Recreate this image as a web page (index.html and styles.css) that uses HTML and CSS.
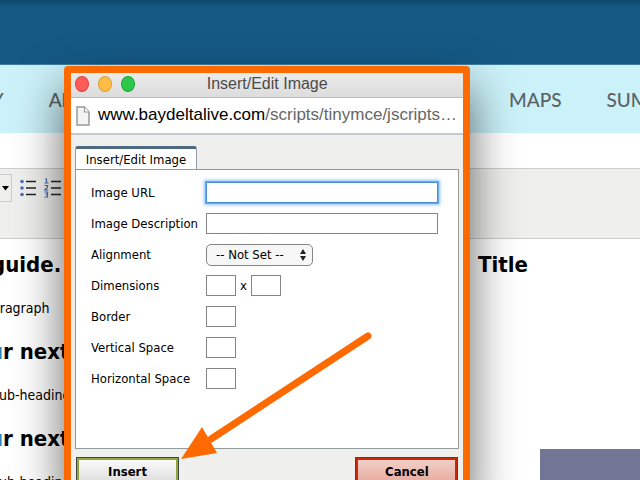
FILE: index.html
```html
<!DOCTYPE html>
<html lang="en">
<head>
    <meta charset="UTF-8">
    <meta name="viewport" content="width=device-width, initial-scale=1.0">
    <title>Insert/Edit Image</title>
    <link rel="stylesheet" href="styles.css">
</head>
<body>
    <header class="banner"></header>

    <nav class="main-nav">
        <div class="nav-left">
            <a href="#">GALLERY</a>
            <a href="#">ABOUT</a>
        </div>
        <div class="nav-right">
            <a href="#">MAPS</a>
            <a href="#">SUMMARY</a>
        </div>
    </nav>

    <!-- Editor toolbar -->
    <div class="toolbar">
        <button class="tool drop" aria-label="Font size">
            <svg width="7" height="5" viewBox="0 0 7 5"><path d="M0 0h7L3.500 4.500z"/></svg>
        </button>
        <button class="tool" aria-label="Bulleted list">
            <svg width="16" height="18" viewBox="0 0 16 18">
                <g fill="#4a6cb3"><circle cx="2" cy="2.500" r="1.800"/><circle cx="2" cy="9" r="1.800"/><circle cx="2" cy="15.500" r="1.800"/></g>
                <path d="M6 2.500h10M6 9h10M6 15.500h10" stroke="#222" stroke-width="1.500"/>
            </svg>
        </button>
        <button class="tool" aria-label="Numbered list">
            <svg width="17" height="20" viewBox="0 0 17 20">
                <path d="M1 1h1.500v4M.5 5h4M.5 7.500h3v2l-3 2.500h3.500M.5 14h3v2.200h-2 2v2.800H.5" fill="none" stroke="#4a6cb3" stroke-width="1.200"/>
                <path d="M7 3.500h10M7 10h10M7 16.500h10" stroke="#222" stroke-width="1.500"/>
            </svg>
        </button>
    </div>

    <main class="content">
        <div class="column guide">
            <h2>guide.</h2>
            <p>paragraph</p>
            <h2 class="next"><span>You</span>r next</h2>
            <p class="sub">Sub-heading</p>
            <h2 class="next"><span>You</span>r next</h2>
            <p class="sub">Sub-heading</p>
        </div>
        <div class="column side">
            <h2>Title</h2>
            <div class="block"></div>
        </div>
    </main>

    <!-- Popup window -->
    <div class="popup" role="dialog" aria-labelledby="popup-title">
        <div class="titlebar">
            <div class="lights">
                <button class="light close" aria-label="Close"></button>
                <button class="light minimize" aria-label="Minimize"></button>
                <button class="light zoom" aria-label="Zoom"></button>
            </div>
            <span id="popup-title">Insert/Edit Image</span>
        </div>
        <div class="address">
            <svg width="14" height="20" viewBox="0 0 14 20">
                <path d="M1 1h7.500L13 6v13H1z" fill="#f4f4f4" stroke="#999" stroke-width="1.500"/>
                <path d="M8.500 1v5H13" fill="#fff" stroke="#999" stroke-width="1.200"/>
            </svg>
            <div class="url"><b>www.baydeltalive.com</b>/scripts/tinymce/jscripts/tiny_mce</div>
        </div>

        <form class="dialog">
            <button type="button" class="tab">Insert/Edit Image</button>
            <div class="panel">
                <label for="src">Image URL</label>
                <input type="text" id="src" class="focused">
                <label for="alt">Image Description</label>
                <input type="text" id="alt">
                <label for="align">Alignment</label>
                <div class="select-wrap">
                    <select id="align">
                        <option>-- Not Set --</option>
                    </select>
                    <svg width="6" height="12" viewBox="0 0 6 12"><path d="M3 0l3 5H0zM3 12l3-5H0z" fill="#222"/></svg>
                </div>
                <label for="width">Dimensions</label>
                <div class="dims">
                    <input type="text" id="width" class="small">
                    <label for="height">x</label>
                    <input type="text" id="height" class="small">
                </div>
                <label for="border">Border</label>
                <input type="text" id="border" class="small">
                <label for="vspace">Vertical Space</label>
                <input type="text" id="vspace" class="small">
                <label for="hspace">Horizontal Space</label>
                <input type="text" id="hspace" class="small">
            </div>
            <div class="actions">
                <button type="button" class="action insert">Insert</button>
                <button type="button" class="action cancel">Cancel</button>
            </div>
        </form>
    </div>

    <svg class="arrow" width="200" height="132" viewBox="0 0 200 132">
        <path d="M187 6L30 109" stroke="#ff6a00" stroke-width="7" stroke-linecap="round"/>
        <path d="M0 129L21 97L36 123z" fill="#ff6a00"/>
    </svg>
</body>
</html>
```

FILE: styles.css
```css
* {
    box-sizing: border-box;
}

body {
    position: relative;
    margin: 0;
    height: 100vh;
    overflow: hidden;
    background-color: #fff;
    color: #000;
    font-family: "DejaVu Sans Condensed", "DejaVu Sans", sans-serif;
    font-size: 13px;
}

button, input, select {
    font: inherit;
    color: inherit;
}

.banner {
    height: 65px;
    background: linear-gradient(#0f4767, #145a85 8px, #145a85);
    border-bottom: 1px solid #3f7f9f;
}

.main-nav {
    display: flex;
    align-items: center;
    height: 68px;
    background-color: #cbf1f9;
    font-family: Lato, sans-serif;
    font-size: 19px;
    font-weight: 500;
}

.main-nav a {
    color: #5c6265;
    text-decoration: none;
}

.nav-left,
.nav-right {
    display: flex;
    gap: 45px;
}

.nav-left {
    width: 509px;
    margin-left: -77px;
    flex-shrink: 0;
}

.nav-right {
    margin-left: 77px;
}

/* Toolbar */
.toolbar {
    display: flex;
    align-items: flex-start;
    gap: 8px;
    height: 71px;
    margin-top: 35px;
    padding-top: 5px;
    background-color: #efefed;
    border-top: 1px solid #ccc;
    border-bottom: 1px solid #ccc;
}

.tool {
    display: flex;
    align-items: center;
    justify-content: center;
    height: 28px;
    padding: 0;
    border: none;
    background: none;
}

.tool.drop {
    width: 12px;
    border: 1px solid #ccc;
    border-left: none;
}

/* Page text */
.content {
    display: flex;
}

.column h2 {
    margin: 0;
    font-size: 22px;
    line-height: 28px;
    white-space: nowrap;
}

.column p {
    margin: 0;
    font-size: 14px;
    line-height: 20px;
}

.guide {
    width: 478px;
    padding-top: 12px;
}

.guide h2 {
    margin-left: -9px;
    margin-bottom: 19px;
}

.guide h2.next {
    margin-left: -37px;
}

.guide h2 span {
    color: #2f83b7;
}

.guide p {
    margin-left: -16px;
    margin-bottom: 20px;
}

.guide p.sub {
    margin-left: -9px;
}

.side {
    flex: 1;
    padding-top: 12px;
}

.block {
    height: 60px;
    margin: 170px 0 0 62px;
    background-color: #727694;
}

/* Popup */
.popup {
    position: absolute;
    top: 66px;
    left: 10%;
    width: 63.5%;
    border: 7px solid #ff6a00;
    border-radius: 4px;
    background-color: #efefed;
    box-shadow: 0 22px 48px rgba(0, 0, 0, 0.6);
}

.titlebar {
    position: relative;
    height: 25px;
    background: linear-gradient(#ebebeb, #dcdcdc);
    border-bottom: 1px solid #bbb;
    color: #4a4a4a;
    font-family: "Liberation Sans", Arial, sans-serif;
    font-size: 16px;
    line-height: 22px;
    text-align: center;
}

.lights {
    position: absolute;
    top: 3px;
    left: 4px;
    display: flex;
    gap: 9px;
}

.light {
    width: 14px;
    height: 16px;
    padding: 0;
    border: 1px solid #e0443e;
    border-radius: 50%;
    background-color: #ff5b58;
}

.light.minimize {
    border-color: #dea034;
    background-color: #ffbd45;
}

.light.zoom {
    border-color: #1fa83a;
    background-color: #2bc84b;
}

.address {
    display: flex;
    align-items: center;
    gap: 8px;
    height: 37px;
    padding: 0 2px 0 5px;
    background-color: #fff;
    border-bottom: 2px solid #c3c8d2;
    font-family: "Liberation Sans", Arial, sans-serif;
    font-size: 17px;
}

.address svg {
    flex-shrink: 0;
}

.url {
    overflow: hidden;
    padding-bottom: 1px;
    color: #666;
    text-overflow: ellipsis;
    white-space: nowrap;
}

.url b {
    color: #000;
    font-weight: normal;
}

/* Form */
.dialog {
    padding: 11px 4px 8px 4px;
}

.tab {
    display: block;
    width: 122px;
    height: 24px;
    padding: 0;
    border: 1px solid #8f9fa8;
    border-top: 3px solid #4d6b80;
    border-bottom: none;
    border-radius: 3px 3px 0 0;
    background-color: #fff;
    line-height: 18px;
}

.panel {
    display: grid;
    grid-template-columns: 115px 1fr;
    grid-auto-rows: 31px;
    align-items: center;
    height: 280px;
    margin-top: -1px;
    padding: 7px 20px 0 15px;
    border: 1px solid #919b9c;
    background-color: #fff;
}

.panel input {
    width: 100%;
    height: 21px;
    border: 1px solid #858585;
    background-color: #fff;
}

.panel input.small {
    width: 30px;
}

.panel input.focused {
    border-color: #4a90d9;
    outline: 1px solid #6aabed;
    box-shadow: 0 0 3px 2px #8fc2f7;
}

.select-wrap {
    position: relative;
    width: 107px;
}

.select-wrap svg {
    position: absolute;
    top: 5px;
    right: 7px;
}

.panel select {
    display: block;
    width: 100%;
    height: 22px;
    padding: 0 9px;
    appearance: none;
    border: 1px solid #858585;
    border-radius: 5px;
    background-color: #f6f6f6;
}

.dims {
    display: flex;
    align-items: center;
    gap: 4px;
}

.actions {
    display: flex;
    justify-content: space-between;
    margin-top: 8px;
    padding: 0 1px;
}

.action {
    width: 103px;
    height: 28px;
    padding: 0;
    border: 3px solid #8fa63a;
    outline: 1px solid #444;
    outline-offset: -1px;
    background: linear-gradient(#fafafa, #dedede);
    font-weight: bold;
}

.action.cancel {
    border-color: #c92a06;
    background: linear-gradient(#f3cfc8, #e8aba0);
}

.arrow {
    position: absolute;
    top: 330px;
    left: 181px;
    fill: none;
    pointer-events: none;
}
```
